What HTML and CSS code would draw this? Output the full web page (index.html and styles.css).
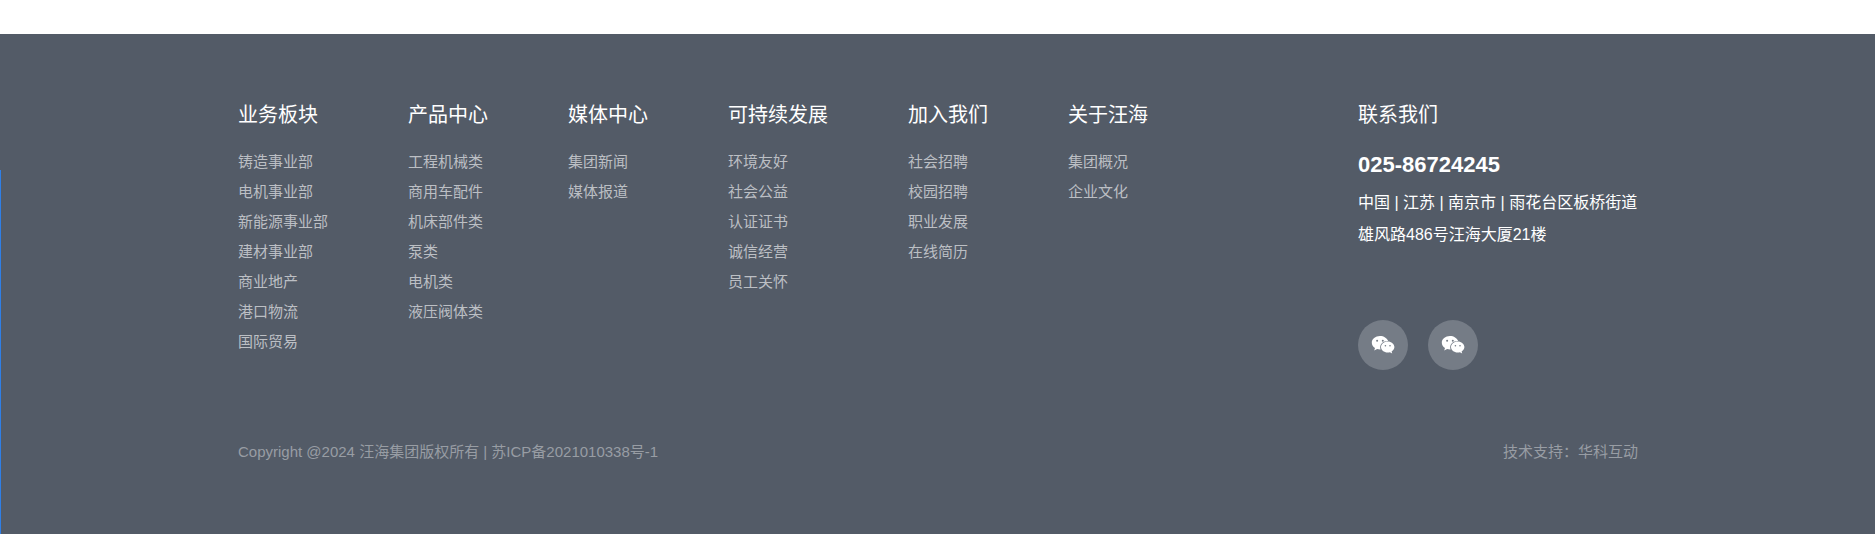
FILE: index.html
```html
<!DOCTYPE html>
<html lang="zh-CN">
<head>
<meta charset="utf-8">
<title>汪海集团</title>
<link rel="stylesheet" href="styles.css">
</head>
<body>
<div class="top-blank"></div>
<footer class="footer">
  <span class="edge-line"></span>
  <div class="inner">
    <div class="main">
      <nav class="cols">
        <div class="col">
          <h3>业务板块</h3>
          <ul>
            <li>铸造事业部</li><li>电机事业部</li><li>新能源事业部</li><li>建材事业部</li><li>商业地产</li><li>港口物流</li><li>国际贸易</li>
          </ul>
        </div>
        <div class="col">
          <h3>产品中心</h3>
          <ul>
            <li>工程机械类</li><li>商用车配件</li><li>机床部件类</li><li>泵类</li><li>电机类</li><li>液压阀体类</li>
          </ul>
        </div>
        <div class="col">
          <h3>媒体中心</h3>
          <ul><li>集团新闻</li><li>媒体报道</li></ul>
        </div>
        <div class="col">
          <h3>可持续发展</h3>
          <ul><li>环境友好</li><li>社会公益</li><li>认证证书</li><li>诚信经营</li><li>员工关怀</li></ul>
        </div>
        <div class="col">
          <h3>加入我们</h3>
          <ul><li>社会招聘</li><li>校园招聘</li><li>职业发展</li><li>在线简历</li></ul>
        </div>
        <div class="col">
          <h3>关于汪海</h3>
          <ul><li>集团概况</li><li>企业文化</li></ul>
        </div>
      </nav>
      <div class="contact">
        <h3>联系我们</h3>
        <p class="phone">025-86724245</p>
        <p class="addr">中国 | 江苏 | 南京市 | 雨花台区板桥街道</p>
        <p class="addr">雄风路486号汪海大厦21楼</p>
        <div class="social">
          <span class="circle">
            <svg viewBox="0 0 24 20" width="24" height="20" aria-hidden="true">
              <path class="bubble" d="M9 1C4.400 1 .8 4 .8 7.700c0 2.200 1.200 4 3.200 5.300l-.8 2.500 2.900-1.500c.9.2 1.900.4 2.900.4h.6c-.3-.7-.4-1.400-.4-2.100 0-3.500 3.300-6.300 7.500-6.300h.5C16 3.100 12.800 1 9 1z"/>
              <circle class="eye" cx="6.100" cy="5.700" r="1"/><circle class="eye" cx="11.800" cy="5.700" r="1"/>
              <path class="bubble" d="M23.400 12.100c0-3-3-5.500-6.700-5.500S10 9.100 10 12.100s3 5.500 6.700 5.500c.8 0 1.500-.1 2.200-.3l2.300 1.300-.6-2.100c1.700-1.100 2.800-2.600 2.800-4.400z"/>
              <circle class="eye" cx="14.400" cy="10.700" r=".8"/><circle class="eye" cx="19" cy="10.700" r=".8"/>
            </svg>
          </span>
          <span class="circle">
            <svg viewBox="0 0 24 20" width="24" height="20" aria-hidden="true">
              <path class="bubble" d="M9 1C4.400 1 .8 4 .8 7.700c0 2.200 1.200 4 3.200 5.300l-.8 2.500 2.900-1.500c.9.2 1.900.4 2.900.4h.6c-.3-.7-.4-1.400-.4-2.100 0-3.500 3.300-6.300 7.500-6.300h.5C16 3.100 12.800 1 9 1z"/>
              <circle class="eye" cx="6.100" cy="5.700" r="1"/><circle class="eye" cx="11.800" cy="5.700" r="1"/>
              <path class="bubble" d="M23.400 12.100c0-3-3-5.500-6.700-5.500S10 9.100 10 12.100s3 5.500 6.700 5.500c.8 0 1.500-.1 2.200-.3l2.300 1.300-.6-2.100c1.700-1.100 2.800-2.600 2.800-4.400z"/>
              <circle class="eye" cx="14.400" cy="10.700" r=".8"/><circle class="eye" cx="19" cy="10.700" r=".8"/>
            </svg>
          </span>
        </div>
      </div>
    </div>
    <div class="bottom">
      <span>Copyright @2024 汪海集团版权所有 | 苏ICP备2021010338号-1</span>
      <span>技术支持：华科互动</span>
    </div>
  </div>
</footer>
</body>
</html>
```

FILE: styles.css
```css
* { box-sizing: border-box; }
html, body { margin: 0; padding: 0; }
body {
  height: 534px;
  overflow: hidden;
  background: #fff;
  font-family: "Liberation Sans", "Noto Sans CJK SC", sans-serif;
}
.top-blank { height: 34px; background: #fff; }
.footer {
  position: relative;
  height: 500px;
  background: #535b67;
  padding-top: 66px;
}
.edge-line {
  position: absolute;
  left: 0;
  top: 136px;
  bottom: 0;
  width: 1px;
  background: #2f7fe6;
}
.inner { width: 1400px; margin-left: 238px; }
.main { display: flex; justify-content: space-between; height: 342px; }
.cols { display: flex; gap: 80px; }
h3 {
  margin: 0;
  font-size: 20px;
  font-weight: 400;
  line-height: 30px;
  color: #fff;
}
ul { list-style: none; margin: 17px 0 0; padding: 0; }
li {
  font-size: 15px;
  line-height: 30px;
  color: #bcbfc4;
  white-space: nowrap;
}
.contact { width: 280px; }
.phone {
  margin: 20px 0 0;
  font-size: 22px;
  font-weight: 700;
  line-height: 30px;
  color: #fff;
}
.addr {
  margin: 0;
  font-size: 16px;
  line-height: 32px;
  color: #fff;
  white-space: nowrap;
}
.phone + .addr { margin-top: 7px; }
.social { display: flex; gap: 20px; margin-top: 69px; }
.circle {
  width: 50px;
  height: 50px;
  border-radius: 50%;
  background: #757c86;
  display: flex;
  align-items: center;
  justify-content: center;
}
.bubble { fill: #fff; }
.eye { fill: #757c86; }
.bottom {
  display: flex;
  justify-content: space-between;
  font-size: 15px;
  line-height: 20px;
  color: #989da4;
}
```
